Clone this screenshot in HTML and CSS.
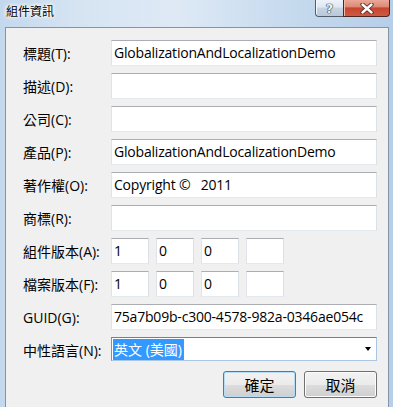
FILE: index.html
```html
<!DOCTYPE html>
<html>
<head>
    <meta charset="utf-8">
    <title>組件資訊</title>
    <link rel="stylesheet" href="styles.css">
</head>
<body>
    <div class="window">
      <div class="titlebar">
        <span class="title">組件資訊</span>
        <div class="caption">
          <span class="caption--help">?</span>
          <span class="caption--close">
            <svg width="14" height="11" viewBox="0 0 14 11">
              <path d="M2.5 1.5 L11.5 9.5 M11.5 1.5 L2.5 9.5" stroke="#4a2a26" stroke-width="4.2" stroke-linecap="round"/>
              <path d="M2.5 1.5 L11.5 9.5 M11.5 1.5 L2.5 9.5" stroke="#ffffff" stroke-width="2.4" stroke-linecap="round"/>
            </svg>
          </span>
        </div>
      </div>

      <div class="client">
        <div class="form">
          <label>標題(T):</label>
          <div class="textbox">GlobalizationAndLocalizationDemo</div>

          <label>描述(D):</label>
          <div class="textbox"></div>

          <label>公司(C):</label>
          <div class="textbox"></div>

          <label>產品(P):</label>
          <div class="textbox">GlobalizationAndLocalizationDemo</div>

          <label>著作權(O):</label>
          <div class="textbox">Copyright ©&nbsp;&nbsp; 2011</div>

          <label>商標(R):</label>
          <div class="textbox"></div>

          <label>組件版本(A):</label>
          <div class="version">
            <div class="textbox">1</div>
            <div class="textbox">0</div>
            <div class="textbox">0</div>
            <div class="textbox"></div>
          </div>

          <label>檔案版本(F):</label>
          <div class="version">
            <div class="textbox">1</div>
            <div class="textbox">0</div>
            <div class="textbox">0</div>
            <div class="textbox"></div>
          </div>

          <label>GUID(G):</label>
          <div class="textbox">75a7b09b-c300-4578-982a-0346ae054c</div>

          <label>中性語言(N):</label>
          <div class="combo">
            <span class="combo--selected">英文 (美國)</span>
            <span class="combo--arrow"></span>
          </div>
        </div>

        <div class="actions">
          <button class="btn btn--default">確定</button>
          <button class="btn">取消</button>
        </div>
      </div>
    </div>
</body>
</html>
```

FILE: styles.css
```css
html, body {
  margin: 0;
}

body {
  width: 393px;
  height: 407px;
  overflow: hidden;
  font-family: "Open Sans", "Noto Sans CJK TC", sans-serif;
  color: #000;
}

.window {
  height: 407px;
  display: flex;
  flex-direction: column;
  background: linear-gradient(90deg, #c3d8ed 0%, #d6e4f2 20%, #dee9f5 45%, #c9dcef 70%, #b6cee8 100%);
}

.titlebar {
  height: 27px;
  flex: none;
  display: flex;
  justify-content: space-between;
  align-items: flex-start;
}

.title {
  margin: 3px 0 0 6px;
  font-size: 12px;
  line-height: 17px;
  text-shadow: 0 0 5px #fff, 0 0 5px #fff, 0 0 3px #fff;
}

.caption {
  display: flex;
  margin-right: 3px;
}

.caption--help,
.caption--close {
  height: 17px;
  box-sizing: border-box;
  display: flex;
  align-items: center;
  justify-content: center;
  border: 1px solid #4f5c6b;
  border-top: none;
}

.caption--help {
  width: 28px;
  border-right: none;
  border-radius: 0 0 0 4px;
  background: linear-gradient(#eef3f9 0%, #dfe7f1 45%, #c6d3e2 50%, #b9c8da 100%);
  box-shadow: inset 1px 0 0 #f7fafd;
  font: bold 13px "DejaVu Sans", sans-serif;
  color: #eef2f7;
  text-shadow: 0 0 1px #2b3746, 0 0 1px #2b3746, 0 0 1px #2b3746;
}

.caption--close {
  width: 47px;
  border-radius: 0 0 4px 0;
  border-color: #4b2622;
  background: linear-gradient(#eaa898 0%, #dd8a77 42%, #c8452f 50%, #cf5a43 100%);
  box-shadow: inset 1px 0 0 #f0b9ac;
}

.client {
  flex: 1;
  margin: 0 4px 0 5px;
  border: 1px solid #8394a7;
  border-bottom: none;
  background: #f0f0f0;
  padding: 12px 11px 0 17px;
}

.form {
  display: grid;
  grid-template-columns: 88px 1fr;
  grid-auto-rows: 26px;
  row-gap: 7px;
}

.form label {
  display: flex;
  align-items: center;
  font-size: 14px;
  white-space: nowrap;
}

.textbox {
  box-sizing: border-box;
  height: 26px;
  background: #fff;
  border: 1px solid #e3e9ef;
  border-top-color: #abadb3;
  border-left-color: #e2e3ea;
  border-right-color: #dbdfe6;
  padding: 0 2px;
  font-size: 14px;
  letter-spacing: -0.2px;
  line-height: 24px;
  white-space: nowrap;
  overflow: hidden;
}

.version {
  display: flex;
  gap: 7px;
}

.version .textbox {
  width: 38px;
}

.combo {
  box-sizing: border-box;
  height: 24px;
  background: #fff;
  border: 1px solid #a9c6e4;
  border-top-color: #5b86b3;
  border-left-color: #6f95be;
  display: flex;
  align-items: center;
  justify-content: space-between;
  padding: 0 1px;
  font-size: 14px;
}

.combo--selected {
  background: #3399ff;
  color: #fff;
  line-height: 21px;
  padding: 0 1px;
  border-right: 1px solid #d9731f;
}

.combo--arrow {
  width: 0;
  height: 0;
  margin-right: 4px;
  border-left: 3.5px solid transparent;
  border-right: 3.5px solid transparent;
  border-top: 4px solid #000;
}

.actions {
  display: flex;
  justify-content: flex-end;
  gap: 8px;
  margin-top: 8px;
}

.btn {
  width: 73px;
  height: 27px;
  box-sizing: border-box;
  border: 1px solid #707070;
  border-radius: 3px;
  background: linear-gradient(#f2f2f2 0%, #ebebeb 50%, #dddddd 50%, #cfcfcf 100%);
  box-shadow: inset 0 0 0 1px #fcfcfc;
  font-family: "Noto Sans CJK TC", sans-serif;
  font-size: 15px;
  color: #000;
  padding: 0;
}

.btn--default {
  border-color: #3c7fb1;
  box-shadow: inset 0 0 0 1px #b8dcf4;
}
```
